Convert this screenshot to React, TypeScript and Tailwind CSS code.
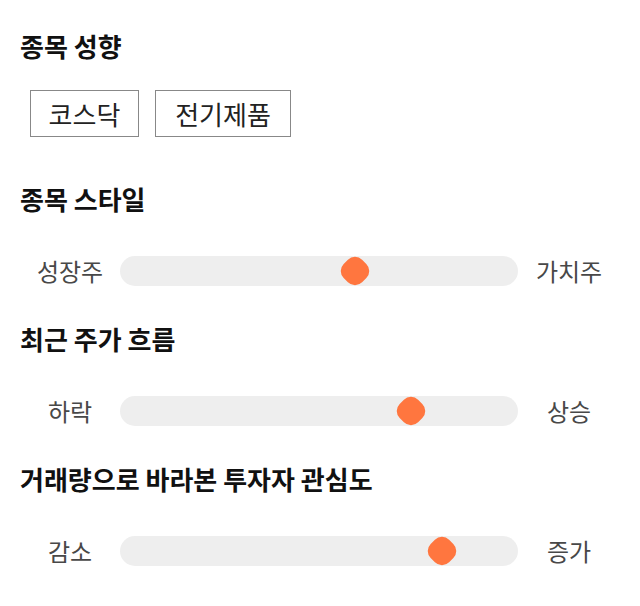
const sliders = [
  { title: '종목 스타일', left: '성장주', right: '가치주', value: 0.59 },
  { title: '최근 주가 흐름', left: '하락', right: '상승', value: 0.73 },
  { title: '거래량으로 바라본 투자자 관심도', left: '감소', right: '증가', value: 0.81 },
]

function Slider({ left, right, value }: { left: string; right: string; value: number }) {
  return (
    <div className="flex items-center h-[30px]">
      <span className="w-[100px] text-center text-[24px] text-[#484848]">{left}</span>
      <div className="relative flex-1 h-[30px] rounded-full bg-[#eeeeee]">
        <div
          className="absolute top-[2px] w-[26px] h-[26px] -ml-[13px] rotate-45 rounded-[10px] bg-[#ff763f]"
          style={{ left: `${value * 100}%` }}
        />
      </div>
      <span className="w-[102px] text-center text-[24px] text-[#484848]">{right}</span>
    </div>
  )
}

export default function App() {
  return (
    <div className="bg-white w-[640px] h-[606px] px-[20px] pt-[30px] text-[#111] font-['Noto_Sans_CJK_KR',sans-serif]">
      <h2 className="text-[26px] font-bold leading-[32px]">종목 성향</h2>
      <div className="flex gap-[16px] mt-[28px] ml-[10px]">
        <span className="h-[47px] w-[109px] flex items-center justify-center border border-[#888] text-[26px] text-[#222]">
          코스닥
        </span>
        <span className="h-[47px] w-[136px] flex items-center justify-center border border-[#888] text-[26px] text-[#222]">
          전기제품
        </span>
      </div>
      {sliders.map((s, i) => (
        <div key={s.title} className={i === 0 ? 'mt-[46px]' : 'mt-[37px]'}>
          <h2 className="text-[26px] font-bold leading-[32px]">{s.title}</h2>
          <div className="mt-[41px]">
            <Slider left={s.left} right={s.right} value={s.value} />
          </div>
        </div>
      ))}
    </div>
  )
}
